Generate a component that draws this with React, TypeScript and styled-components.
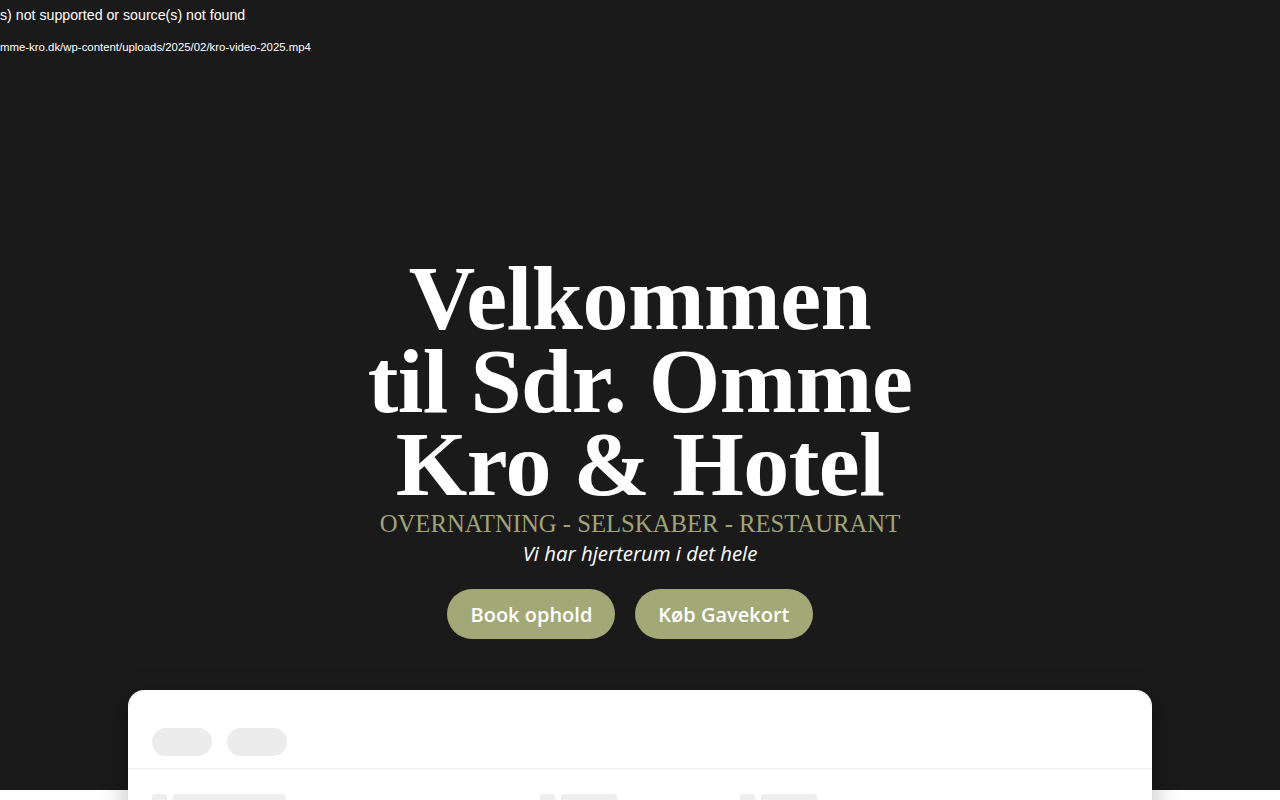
import styled, { createGlobalStyle } from 'styled-components'

const GlobalStyle = createGlobalStyle`
  * {
    box-sizing: border-box;
  }
  body {
    margin: 0;
    background: #ffffff;
    font-family: 'Liberation Sans', Arial, sans-serif;
  }
`

const Page = styled.div`
  width: 100%;
  min-height: 100vh;
  overflow: hidden;
`

const Hero = styled.section`
  position: relative;
  height: 790px;
  background: #1a1a1a;
  display: flex;
  flex-direction: column;
  align-items: center;
  padding-top: 257px;
`

const VideoError = styled.div`
  position: absolute;
  top: 0;
  left: 0;
  color: #ffffff;
  font-family: 'Liberation Sans', Arial, sans-serif;
`

const ErrorTitle = styled.div`
  font-size: 14.2px;
  line-height: 18px;
  padding-top: 6px;
`

const ErrorSource = styled.div`
  font-size: 11.4px;
  line-height: 13px;
  margin-top: 17px;
`

const Title = styled.h1`
  margin: 0;
  width: 600px;
  text-align: center;
  color: #ffffff;
  font-family: 'Liberation Serif', 'Times New Roman', serif;
  font-weight: 700;
  font-size: 92px;
  line-height: 83px;
  letter-spacing: -0.5px;
`

const Subtitle = styled.div`
  margin-top: 3px;
  color: #a0a479;
  font-family: 'Liberation Serif', 'Times New Roman', serif;
  font-size: 24.7px;
  line-height: 30px;
  text-transform: uppercase;
`

const Tagline = styled.div`
  color: #ffffff;
  font-family: 'Open Sans', sans-serif;
  font-style: italic;
  font-size: 20.4px;
  line-height: 28px;
`

const Actions = styled.div`
  display: flex;
  margin-top: 22px;
`

const Button = styled.a`
  display: flex;
  align-items: center;
  height: 50px;
  margin-right: 20px;
  padding: 0 23px;
  border-radius: 25px;
  background: #a3a877;
  color: #ffffff;
  font-family: 'Open Sans', sans-serif;
  font-weight: 600;
  font-size: 20px;
  text-decoration: none;
`

const Card = styled.section`
  position: relative;
  margin: -100px 128px 0;
  background: #ffffff;
  border-radius: 16px;
  box-shadow: 0 8px 30px rgba(0, 0, 0, 0.25);
  min-height: 300px;
`

const Tabs = styled.div`
  display: flex;
  gap: 15px;
  padding: 38px 24px 12px;
  border-bottom: 1px solid #eeeeee;
`

const TabPill = styled.div`
  width: 60px;
  height: 28px;
  border-radius: 14px;
  background: #ececec;
`

const Fields = styled.div`
  display: grid;
  grid-template-columns: 388px 200px 1fr;
  padding: 25px 24px;
`

const Field = styled.div`
  display: flex;
  gap: 6px;
`

const Icon = styled.div`
  width: 15px;
  height: 15px;
  border-radius: 3px;
  background: #eeeeee;
`

const Label = styled.div<{ $w: number }>`
  width: ${(p) => p.$w}px;
  height: 15px;
  border-radius: 3px;
  background: #eeeeee;
`

const App = () => {
  return (
    <Page>
      <GlobalStyle />
      <Hero>
        <VideoError>
          <ErrorTitle>s) not supported or source(s) not found</ErrorTitle>
          <ErrorSource>mme-kro.dk/wp-content/uploads/2025/02/kro-video-2025.mp4</ErrorSource>
        </VideoError>
        <Title>
          Velkommen
          <br />
          til Sdr. Omme
          <br />
          Kro &amp; Hotel
        </Title>
        <Subtitle>Overnatning - Selskaber - Restaurant</Subtitle>
        <Tagline>Vi har hjerterum i det hele</Tagline>
        <Actions>
          <Button href="#">Book ophold</Button>
          <Button href="#">Køb Gavekort</Button>
        </Actions>
      </Hero>
      <Card>
        <Tabs>
          <TabPill />
          <TabPill />
        </Tabs>
        <Fields>
          <Field>
            <Icon />
            <Label $w={113} />
          </Field>
          <Field>
            <Icon />
            <Label $w={56} />
          </Field>
          <Field>
            <Icon />
            <Label $w={56} />
          </Field>
        </Fields>
      </Card>
    </Page>
  )
}

export default App
